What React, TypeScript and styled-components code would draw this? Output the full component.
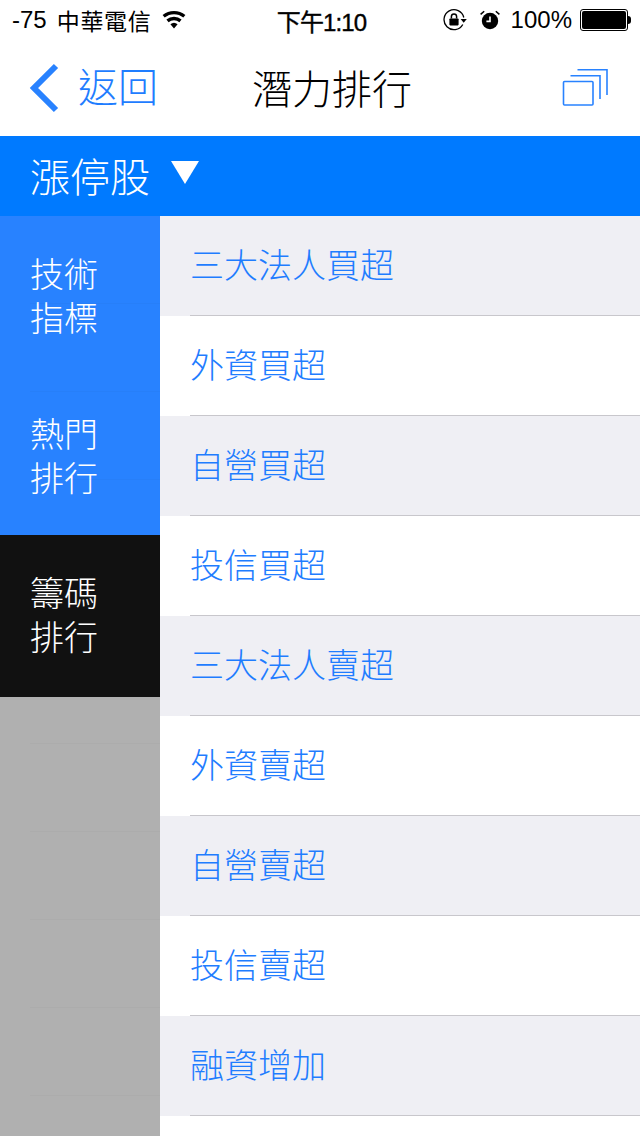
import styled, { createGlobalStyle } from "styled-components";

const sideItems = [
  { label: ["技術", "指標"], dark: false },
  { label: ["熱門", "排行"], dark: false },
  { label: ["籌碼", "排行"], dark: true },
];

const rankItems = [
  "三大法人買超",
  "外資買超",
  "自營買超",
  "投信買超",
  "三大法人賣超",
  "外資賣超",
  "自營賣超",
  "投信賣超",
  "融資增加",
];

const App = () => {
  return (
    <Screen>
      <GlobalStyle />
      <StatusBar>
        <StatusGroup>
          <Signal>-75</Signal>
          <Carrier>中華電信</Carrier>
          <svg width="26" height="20" viewBox="0 0 26 20">
            <path
              d="M13 18.5l-3.6-4.2a5.4 5.4 0 0 1 7.2 0zM7.6 12.2L5.4 9.6a11.6 11.6 0 0 1 15.2 0l-2.2 2.6a8.2 8.2 0 0 0-10.8 0zM3.7 7.6L1.6 5.1a17.6 17.6 0 0 1 22.8 0l-2.1 2.5a14.4 14.4 0 0 0-18.6 0z"
              fill="#000"
            />
          </svg>
        </StatusGroup>
        <Clock>下午1:10</Clock>
        <StatusRight>
          <svg width="24" height="24" viewBox="0 0 24 24">
            <path
              d="M19.8 16.5A10 10 0 1 1 20.8 9.5"
              fill="none"
              stroke="#000"
              strokeWidth="1.3"
            />
            <path d="M17.6 11h6.2l-3.1 3.8z" fill="#000" />
            <rect x="6.4" y="10.4" width="9.2" height="7" rx="0.8" fill="#000" />
            <path d="M8.4 10.6V8.6a2.6 2.6 0 0 1 5.2 0v2" fill="none" stroke="#000" strokeWidth="1.5" />
          </svg>
          <AlarmIcon width="20" height="22" viewBox="0 0 20 22">
            <circle cx="10" cy="12" r="8.2" fill="#000" />
            <path d="M10 7.4v5H6.4" fill="none" stroke="#fff" strokeWidth="1.6" />
            <path d="M0.6 5.4L4.2 2.2M19.4 5.4L15.8 2.2" fill="none" stroke="#000" strokeWidth="1.5" />
          </AlarmIcon>
          <Percent>100%</Percent>
          <Battery>
            <BatteryFill />
          </Battery>
          <BatteryTip />
        </StatusRight>
      </StatusBar>

      <NavBar>
        <BackButton>
          <svg width="32" height="52" viewBox="0 0 32 52">
            <path d="M27 4L5 26l22 22" fill="none" stroke="#2882ff" strokeWidth="6" />
          </svg>
          <BackLabel>返回</BackLabel>
        </BackButton>
        <Title>潛力排行</Title>
        <PagesIcon width="46" height="38" viewBox="0 0 46 38">
          <g fill="none" stroke="#2882ff" strokeWidth="1.6">
            <rect x="1.5" y="13.5" width="29.5" height="23.5" rx="1" />
            <path d="M8.5 7.8H38V31" />
            <path d="M15.5 1.8H45V27" />
          </g>
        </PagesIcon>
      </NavBar>

      <FilterBar>
        <FilterLabel>漲停股</FilterLabel>
        <FilterArrow />
      </FilterBar>

      <Body>
        <Sidebar>
          {sideItems.map((item) => (
            <SideItem key={item.label.join("")} $dark={item.dark}>
              {item.label.map((line) => (
                <SideLine key={line}>{line}</SideLine>
              ))}
            </SideItem>
          ))}
        </Sidebar>
        <RankList>
          {rankItems.map((item, i) => (
            <RankRow key={item} $shaded={i % 2 === 0}>
              <RankLabel>{item}</RankLabel>
            </RankRow>
          ))}
        </RankList>
      </Body>
    </Screen>
  );
};

export default App;

const GlobalStyle = createGlobalStyle`
  html, body {
    margin: 0;
    padding: 0;
    background: #fff;
  }
`;

const Screen = styled.div`
  width: 640px;
  height: 1136px;
  overflow: hidden;
  display: flex;
  flex-direction: column;
  background: #fff;
  font-family: "Noto Sans CJK TC", "Liberation Sans", sans-serif;
  font-weight: 300;
`;

const StatusBar = styled.div`
  height: 40px;
  flex: none;
  display: grid;
  grid-template-columns: 1fr auto 1fr;
  align-items: center;
  padding: 0 9px 0 12px;
  color: #000;
  font-size: 24px;
`;

const StatusGroup = styled.div`
  display: flex;
  align-items: center;
`;

const Signal = styled.span`
  font-family: "Liberation Sans", sans-serif;
  font-size: 24px;
  margin-right: 10px;
`;

const Carrier = styled.span`
  font-size: 23px;
  font-weight: 400;
  letter-spacing: 0.7px;
  margin-right: 9px;
`;

const Clock = styled.span`
  font-size: 24px;
  font-family: "Liberation Sans", "Noto Sans CJK TC", sans-serif;
  letter-spacing: -0.9px;
  font-weight: 400;
  -webkit-text-stroke: 0.4px #000;
`;

const StatusRight = styled.div`
  display: flex;
  align-items: center;
  justify-content: flex-end;
`;

const AlarmIcon = styled.svg`
  margin-left: 13px;
`;

const Percent = styled.span`
  font-family: "Liberation Sans", sans-serif;
  font-size: 24px;
  margin-left: 11px;
  margin-right: 8px;
`;

const Battery = styled.div`
  width: 44px;
  height: 18px;
  border: 1px solid #000;
  border-radius: 3px;
  padding: 1px;
`;

const BatteryFill = styled.div`
  height: 100%;
  background: #000;
  border-radius: 2px;
`;

const BatteryTip = styled.div`
  width: 3px;
  height: 8px;
  background: #000;
  border-radius: 0 3px 3px 0;
`;

const NavBar = styled.div`
  height: 96px;
  flex: none;
  display: flex;
  align-items: center;
  justify-content: space-between;
  padding: 0 32px 0 29px;
`;

const BackButton = styled.div`
  display: flex;
  align-items: center;
  gap: 17px;
`;

const BackLabel = styled.span`
  color: #1f7dff;
  font-size: 40px;
  line-height: 1;
  margin-top: -6px;
`;

const Title = styled.div`
  font-size: 40px;
  line-height: 1;
  color: #000;
  margin: -2px 56px 0 0;
`;

const PagesIcon = styled.svg`
  margin-top: -2px;
`;

const FilterBar = styled.div`
  height: 80px;
  flex: none;
  background: #007aff;
  display: flex;
  align-items: center;
  padding-left: 30px;
  gap: 21px;
`;

const FilterLabel = styled.span`
  color: #fff;
  font-size: 40px;
  line-height: 1;
  margin-top: -2px;
`;

const FilterArrow = styled.div`
  width: 0;
  height: 0;
  border-left: 14px solid transparent;
  border-right: 14px solid transparent;
  border-top: 23px solid #fff;
  margin-top: -7px;
`;

const Body = styled.div`
  flex: 1;
  display: flex;
  min-height: 0;
`;

const Sidebar = styled.div`
  width: 160px;
  flex: none;
  background-color: #b0b0b0;
  display: flex;
  flex-direction: column;
  position: relative;

  /* faint rows of the table lying behind the translucent menu */
  &::after {
    content: "";
    position: absolute;
    inset: 87px 0 0 30px;
    background: repeating-linear-gradient(
      to bottom,
      rgba(0, 0, 0, 0.025) 0,
      rgba(0, 0, 0, 0.025) 1px,
      transparent 1px,
      transparent 88px
    );
  }
`;

const SideItem = styled.div<{ $dark: boolean }>`
  height: ${(props) => (props.$dark ? "162px" : "160px")};
  margin-top: ${(props) => (props.$dark ? "-1px" : "0")};
  background: ${(props) => (props.$dark ? "#111111" : "#2882ff")};
  box-sizing: border-box;
  padding: 35px 0 0 30px;
  color: #fff;
`;

const SideLine = styled.div`
  font-size: 34px;
  line-height: 44px;
`;

const RankList = styled.div`
  flex: 1;
  min-width: 0;
`;

const RankRow = styled.div<{ $shaded: boolean }>`
  height: 100px;
  box-sizing: border-box;
  background: ${(props) => (props.$shaded ? "#efeff4" : "#fff")};
  display: flex;
  align-items: center;
  padding-left: 30px;
  position: relative;

  &::after {
    content: "";
    position: absolute;
    left: 30px;
    right: 0;
    bottom: 0;
    height: 1px;
    background: #c8c7cc;
  }
`;

const RankLabel = styled.span`
  color: #1f7dff;
  font-size: 34px;
  line-height: 1;
  margin-top: -4px;
`;
